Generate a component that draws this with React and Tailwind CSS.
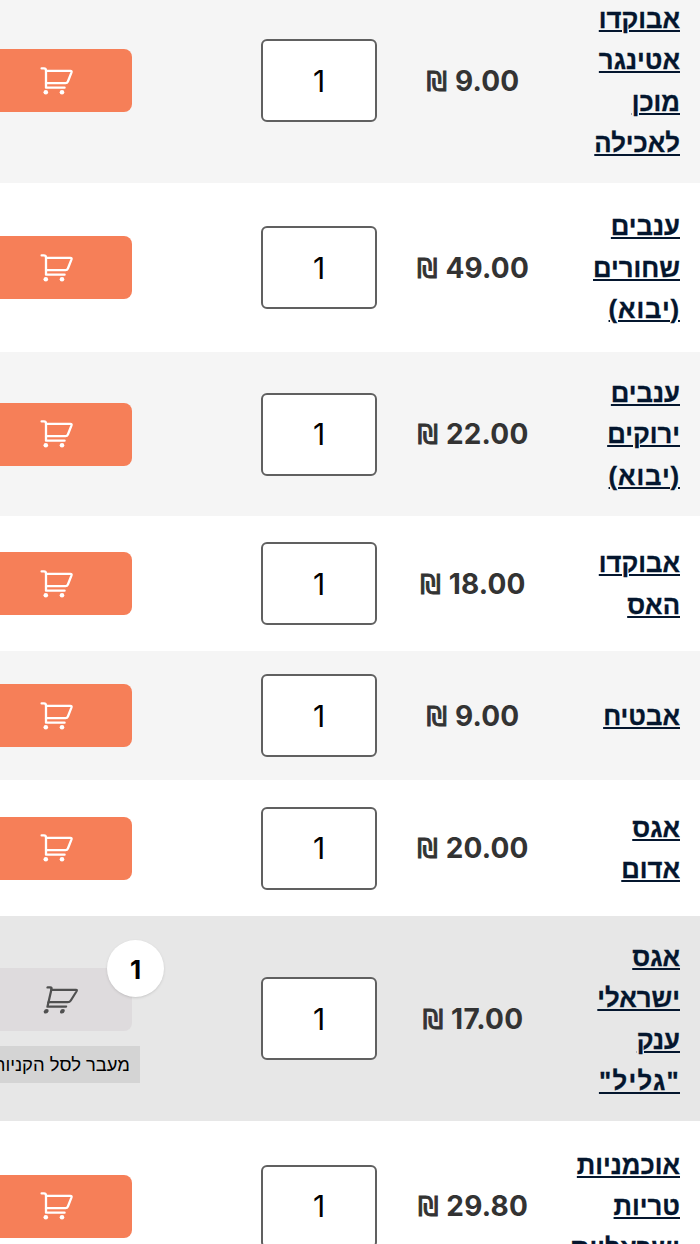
import React from 'react';
import clsx from 'clsx';

const products = [
  { id: 1, lines: ['אבוקדו', 'אטינגר', 'מוכן', 'לאכילה'], price: '9.00', rowClass: 'h-[205px] bg-[#f5f5f5]' },
  { id: 2, lines: ['ענבים', 'שחורים', '(יבוא)'], price: '49.00', rowClass: 'h-[169px] bg-white' },
  { id: 3, lines: ['ענבים', 'ירוקים', '(יבוא)'], price: '22.00', rowClass: 'h-[164px] bg-[#f5f5f5]' },
  { id: 4, lines: ['אבוקדו', 'האס'], price: '18.00', rowClass: 'h-[135px] bg-white' },
  { id: 5, lines: ['אבטיח'], price: '9.00', rowClass: 'h-[129px] bg-[#f5f5f5]' },
  { id: 6, lines: ['אגס', 'אדום'], price: '20.00', rowClass: 'h-[136px] bg-white' },
  { id: 7, lines: ['אגס', 'ישראלי', 'ענק', '"גליל"'], price: '17.00', rowClass: 'h-[205px] bg-[#e7e7e7]', inCart: 1 },
  { id: 8, lines: ['אוכמניות', 'טריות', 'ישראליות'], price: '29.80', rowClass: 'h-[170px] bg-white' },
];

const CartIcon = ({ className }) => (
  <svg
    viewBox="0 0 34 30"
    className={clsx('h-[30px] w-[34px] overflow-visible', className)}
    fill="none"
    stroke="currentColor"
    strokeWidth="2.3"
    strokeLinecap="round"
    strokeLinejoin="round"
  >
    <path d="M1.6 2.4H4Q6 2.4 6 4.6V21.7H24.6" />
    <path d="M6 4.8H30.4Q32 4.8 31.5 6.3L27.9 15.5Q27.2 17.2 25.6 17.2H6" />
    <circle cx="5.8" cy="26.3" r="2.3" fill="currentColor" stroke="none" />
    <circle cx="22" cy="26.3" r="2.3" fill="currentColor" stroke="none" />
  </svg>
);

const AddToCart = ({ inCart }) => {
  if (!inCart) {
    return (
      <button className="flex h-[63px] w-[132px] items-center rounded-r-lg bg-[#f67f58] pl-10 text-white">
        <CartIcon />
      </button>
    );
  }

  return (
    <div className="flex flex-col items-start gap-[15px] pt-[13px]">
      <div className="relative">
        <button className="flex h-[63px] w-[132px] items-center rounded-r-lg bg-[#dedbdd] pt-0.5 pl-[43px] text-[#505050]">
          <CartIcon className="skew-x-[-13deg]" />
        </button>
        {/* quantity already in the cart */}
        <span className="absolute -top-7 left-[107px] flex size-[57px] items-center justify-center rounded-full bg-white pt-0.5 text-[26px] font-bold text-black shadow-sm">
          {inCart}
        </span>
      </div>
      <a
        dir="rtl"
        className="flex h-[37px] w-[140px] items-center overflow-hidden bg-[#d4d4d4] pt-0.5 pr-2.5 font-['Liberation_Sans',sans-serif] text-[18.4px] whitespace-nowrap text-black"
      >
        מעבר לסל הקניות
      </a>
    </div>
  );
};

const ProductRow = ({ product }) => (
  <div className={clsx('grid shrink-0 grid-cols-[261px_116px_192px_111px] items-center', product.rowClass)}>
    <AddToCart inCart={product.inCart} />
    <input
      type="text"
      defaultValue="1"
      className="h-[83px] w-full rounded-md border-2 border-[#606060] bg-white text-center text-[30px] text-black"
    />
    <div className="flex items-baseline justify-center gap-2 text-[28px] font-bold text-[#333333]">
      <span className="font-['DejaVu_Sans',sans-serif] text-[26px] font-normal [-webkit-text-stroke:1px_#333333]">₪</span>
      <span className="tracking-[0.2px]">{product.price}</span>
    </div>
    <a
      dir="rtl"
      className="pt-0.5 font-['Liberation_Sans',sans-serif] text-[25.7px] leading-[41.5px] font-bold text-[#04162e] underline decoration-2 underline-offset-2 [-webkit-text-stroke:0.3px_#04162e]"
    >
      {product.lines.map((line) => (
        <span
          key={line}
          className={clsx(
            'block whitespace-nowrap',
            line.includes('"') && 'tracking-[1.3px]',
            line.includes('(') && 'tracking-[0.9px]'
          )}
        >
          {line}
        </span>
      ))}
    </a>
  </div>
);

const App = () => {
  return (
    <div className="h-[1244px] w-[700px] overflow-hidden bg-white font-['Inter',sans-serif]">
      <div className="-mt-[22px] flex flex-col">
        {products.map((product) => (
          <ProductRow key={product.id} product={product} />
        ))}
      </div>
    </div>
  );
};

export default App;
